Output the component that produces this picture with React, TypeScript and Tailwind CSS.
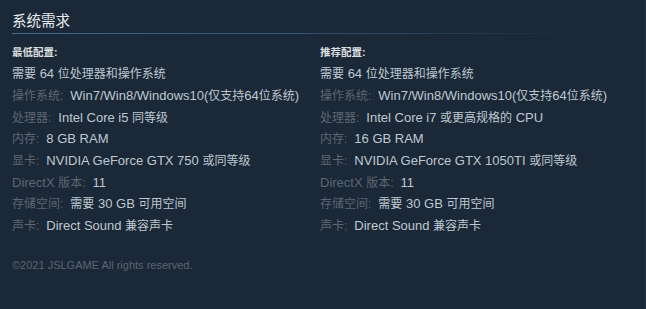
import React from "react";

const min: [string, string][] = [
  ["操作系统:", "Win7/Win8/Windows10(仅支持64位系统)"],
  ["处理器:", "Intel Core i5 同等级"],
  ["内存:", "8 GB RAM"],
  ["显卡:", "NVIDIA GeForce GTX 750 或同等级"],
  ["DirectX 版本:", "11"],
  ["存储空间:", "需要 30 GB 可用空间"],
  ["声卡:", "Direct Sound 兼容声卡"],
];

const rec: [string, string][] = [
  ["操作系统:", "Win7/Win8/Windows10(仅支持64位系统)"],
  ["处理器:", "Intel Core i7 或更高规格的 CPU"],
  ["内存:", "16 GB RAM"],
  ["显卡:", "NVIDIA GeForce GTX 1050TI 或同等级"],
  ["DirectX 版本:", "11"],
  ["存储空间:", "需要 30 GB 可用空间"],
  ["声卡:", "Direct Sound 兼容声卡"],
];

function Mixed({ text }: { text: string }) {
  const parts = text.split(/([\u4e00-\u9fff:]+)/).filter((p) => p.length > 0);
  return (
    <>
      {parts.map((p, i) =>
        /[\u4e00-\u9fff:]/.test(p) ? (
          <span key={i} className="text-[12px]">
            {p}
          </span>
        ) : (
          <span key={i}>{p}</span>
        )
      )}
    </>
  );
}

function Column({ title, rows }: { title: string; rows: [string, string][] }) {
  return (
    <div className="flex flex-col">
      <div className="text-[10.5px] font-bold leading-[14px] h-[14px] text-[#dcdedf] mb-[4px]">{title}</div>
      <div className="h-[21.7px] flex items-center text-[13px] leading-none text-[#bfc8d0] whitespace-pre">
        <Mixed text="需要 64 位处理器和操作系统" />
      </div>
      {rows.map(([k, v]) => (
        <div key={k} className="h-[21.7px] flex items-center text-[13px] leading-none whitespace-pre">
          <span className="text-[#5d6771]">
            <Mixed text={k} />
          </span>
          <span className="ml-[7px] text-[#bfc8d0]">
            <Mixed text={v} />
          </span>
        </div>
      ))}
    </div>
  );
}

export default function App() {
  return (
    <div
      className="w-[646px] h-[309px] bg-[#1b2838] overflow-hidden border-r-2 border-[#202f40]"
      style={{ fontFamily: 'Arial, "Liberation Sans", "Noto Sans CJK SC", sans-serif' }}
    >
      <div className="pl-[12px] pr-[59px] pt-[11px]">
        <div className="text-[14.5px] leading-[20px] h-[20px] text-[#e8ecef]">系统需求</div>
        <div className="h-px mt-[2px] bg-gradient-to-r from-[#3d6c8d] via-[#2f5573] to-transparent" />
        <div className="grid grid-cols-[308px_1fr] mt-[11px]">
          <Column title="最低配置:" rows={min} />
          <Column title="推荐配置:" rows={rec} />
        </div>
        <div className="mt-[21px] text-[11px] leading-[14px] text-[#5b6570]">©2021 JSLGAME All rights reserved.</div>
      </div>
    </div>
  );
}
